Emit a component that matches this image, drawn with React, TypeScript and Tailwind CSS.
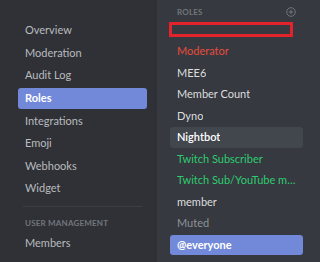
const sideItems = [
  "Overview",
  "Moderation",
  "Audit Log",
  "Roles",
  "Integrations",
  "Emoji",
  "Webhooks",
  "Widget",
];

const roles = [
  { name: "Moderator", color: "text-[#e74c3c]" },
  { name: "MEE6", color: "text-[#dcddde]" },
  { name: "Member Count", color: "text-[#dcddde]" },
  { name: "Dyno", color: "text-[#dcddde]" },
  { name: "Nightbot", color: "text-white font-semibold", active: true },
  { name: "Twitch Subscriber", color: "text-[#2ecc71]" },
  { name: "Twitch Sub/YouTube member", color: "text-[#2ecc71]" },
  { name: "member", color: "text-[#dcddde]" },
  { name: "Muted", color: "text-[#8e9297]" },
];

export default function App() {
  return (
    <div className="w-[320px] h-[262px] flex overflow-hidden font-['Lato',sans-serif] text-[11px]">
      {/* Sidebar */}
      <div className="w-[157px] shrink-0 h-full bg-[#2f3136] pt-[20px] pl-[18px] pr-[10px]">
        <div className="flex flex-col gap-[1.6px]">
          {sideItems.map((item) => (
            <div
              key={item}
              className={`h-[21px] flex items-center px-[7px] rounded-[3px] ${
                item === "Roles"
                  ? "bg-[#7289da] text-white font-bold"
                  : "text-[#b9bbbe]"
              }`}
            >
              {item}
            </div>
          ))}
        </div>
        <div className="mt-[7px] mx-[5px] h-px bg-[#3b3e44]" />
        <div className="mt-[10px] px-[7px] text-[8px] font-bold tracking-[0.2px] text-[#72767d] uppercase">
          User Management
        </div>
        <div className="mt-[4px] h-[21px] flex items-center px-[7px] text-[#b9bbbe]">
          Members
        </div>
      </div>

      {/* Roles list */}
      <div className="flex-1 min-w-0 h-full bg-[#36393f] pl-[13px] pr-[17px] pt-[4px]">
        <div className="h-[15px] flex items-center justify-between pl-[7px] pr-[7px]">
          <span className="text-[8px] font-bold tracking-[0.2px] text-[#72767d]">
            ROLES
          </span>
          <svg width="10" height="10" viewBox="0 0 10 10" fill="none">
            <circle cx="5" cy="5" r="4.3" stroke="#72767d" strokeWidth="1" />
            <path d="M5 2.8v4.4M2.8 5h4.4" stroke="#72767d" strokeWidth="1" />
          </svg>
        </div>
        <div className="flex flex-col">
          <div className="h-[21.5px] flex items-center">
            <div className="ml-[-1px] w-[124px] h-[15px] border-[3px] border-[#e3232c]" />
          </div>
          {roles.map((r) => (
            <div
              key={r.name}
              className={`h-[21.5px] flex items-center px-[7px] rounded-[3px] ${r.color} ${
                r.active ? "bg-[#42464d]" : ""
              }`}
            >
              <span className="truncate">{r.name}</span>
            </div>
          ))}
          <div className="h-[20.5px] mt-[0.5px] flex items-center px-[7px] rounded-[3px] bg-[#7289da] text-white font-bold">
            @everyone
          </div>
        </div>
      </div>
    </div>
  );
}
